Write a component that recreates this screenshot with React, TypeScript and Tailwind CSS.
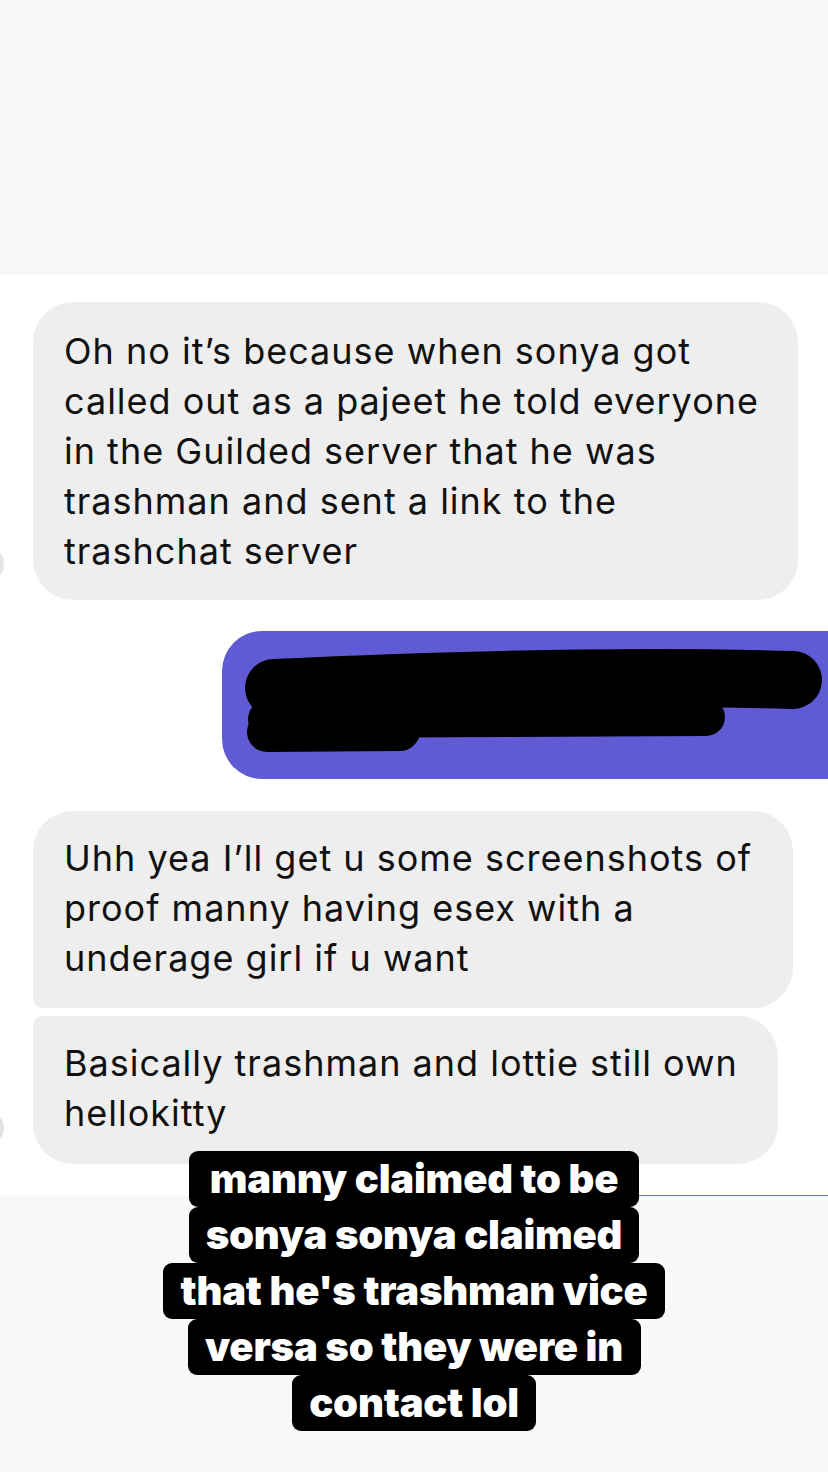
import React from "react";

const captionLines = [
    { text: "manny claimed to be", w: "w-[450px]" },
    { text: "sonya sonya claimed", w: "w-[450px]" },
    { text: "that he's trashman vice", w: "w-[502px]" },
    { text: "versa so they were in", w: "w-[453px]" },
    { text: "contact lol", w: "w-[244px]" },
];

function Avatar({ show }: { show?: boolean }) {
    return (
        <div className={`-ml-[32px] mr-[29px] mb-[18px] h-[36px] w-[36px] shrink-0 rounded-full ${show ? "bg-[#e4e4e4]" : "bg-transparent"}`} />
    );
}

function Bubble({ lines, className }: { lines: string[]; className: string }) {
    return (
        <div className={`bg-[#eeeeee] pl-[31px] pr-[20px] text-[36px] leading-[50px] tracking-[1px] text-[#111] ${className}`}>
            {lines.map((l) => (
                <div key={l} className="whitespace-nowrap">{l}</div>
            ))}
        </div>
    );
}

function Redacted() {
    return (
        <div className="ml-[222px] h-[148px] w-[640px] rounded-l-[40px] bg-[#605ad5]">
            <svg width="606" height="148" viewBox="0 0 606 148">
                <path d="M52 57 C 200 50, 400 44, 571 49" stroke="#000" strokeWidth="58" strokeLinecap="round" fill="none" />
                <path d="M45 88 L 484 86" stroke="#000" strokeWidth="38" strokeLinecap="round" fill="none" />
                <path d="M45 101 L 178 100" stroke="#000" strokeWidth="40" strokeLinecap="round" fill="none" />
                <path d="M48 62 C 60 56, 75 50, 90 50" stroke="#000" strokeWidth="34" strokeLinecap="round" fill="none" />
            </svg>
        </div>
    );
}

export default function App() {
    return (
        <div className="relative flex h-[1472px] w-[828px] flex-col overflow-hidden bg-white font-['Inter',sans-serif]">
            <div className="h-[275px] bg-[#f7f7f7]" />

            <div className="flex h-[920px] flex-col bg-white pt-[27px]">
                <div className="flex items-end">
                    <Avatar show />
                    <Bubble
                        lines={[
                            "Oh no it\u2019s because when sonya got",
                            "called out as a pajeet he told everyone",
                            "in the Guilded server that he was",
                            "trashman and sent a link to the",
                            "trashchat server",
                        ]}
                        className="w-[765px] rounded-[40px] pt-[24px] pb-[24px]"
                    />
                </div>

                <div className="mt-[31px]">
                    <Redacted />
                </div>

                <div className="mt-[32px] flex items-end">
                    <Avatar />
                    <Bubble
                        lines={["Uhh yea I\u2019ll get u some screenshots of", "proof manny having esex with a", "underage girl if u want"]}
                        className="w-[760px] rounded-t-[40px] rounded-br-[40px] rounded-bl-[10px] pt-[22px] pb-[25px]"
                    />
                </div>

                <div className="mt-[8px] flex items-end">
                    <Avatar show />
                    <Bubble
                        lines={["Basically trashman and lottie still own", "hellokitty"]}
                        className="w-[745px] rounded-tl-[10px] rounded-tr-[40px] rounded-b-[40px] pt-[22px] pb-[26px]"
                    />
                </div>
            </div>

            <div className="flex h-px">
                <div className="w-[620px] bg-white" />
                <div className="flex-1 bg-[#5b80c2]" />
            </div>
            <div className="flex-1 bg-[#f8f8f8]" />

            {/* story caption overlay */}
            <div className="absolute left-0 right-0 top-[1151px] flex flex-col items-center">
                {captionLines.map((line) => (
                    <div
                        key={line.text}
                        className={`flex h-[56px] items-center justify-center rounded-[9px] bg-black text-[40px] font-black tracking-[-0.2px] text-white ${line.w}`}
                    >
                        {line.text}
                    </div>
                ))}
            </div>
        </div>
    );
}
